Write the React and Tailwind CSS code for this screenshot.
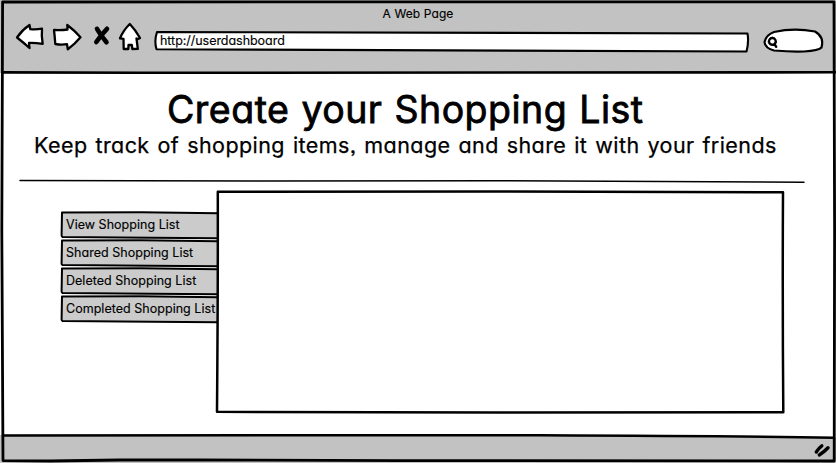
import React from "react";

const FONT =
  "font-['Inter','Open_Sans',sans-serif] [font-feature-settings:'cv11','ss03'] whitespace-nowrap text-black";

function Outline({ d, className = "", fill = "none", width = 3 }) {
  return (
    <svg
      className={`pointer-events-none absolute left-0 top-0 h-full w-full overflow-visible ${className}`}
      fill={fill}
      stroke="#000"
      strokeWidth={width}
      strokeLinecap="round"
      strokeLinejoin="round"
      aria-hidden="true"
    >
      <path d={d} />
    </svg>
  );
}

function NavIcons() {
  return (
    <svg
      width="128"
      height="32"
      viewBox="14 20 128 32"
      fill="#fff"
      stroke="#000"
      strokeWidth="2.3"
      strokeLinejoin="round"
      strokeLinecap="round"
      aria-hidden="true"
    >
      <path d="M17 37.5 Q22 30 29.5 25 L30.3 29.2 Q36 29.8 42 28.7 Q41.3 36 42.7 43.8 Q35 42.8 29 43 L29.5 48 Q24 43 17 37.5Z" />
      <path d="M54 30 Q61 30.5 67.5 29.5 L67.3 25 Q74 30 80.5 37.3 Q75 44 67.8 49.3 L67 44.2 Q61 45 55.3 44 Q54.8 37 54 30Z" />
      <path d="M97 28.8 Q100 34 106.5 42.2 M107 28.8 Q101 35 96.3 42" strokeWidth="4.6" />
      <path d="M129.8 24 Q135.5 30 140 38 Q138 39.5 136.5 38.5 L137.8 48.8 L132.4 49 L131.8 45 L128.5 45 L128.3 49 L123.7 49 L123.5 38.8 L120 38.3 Q123.5 30 129.8 24Z" />
    </svg>
  );
}

const items = [
  "View Shopping List",
  "Shared Shopping List",
  "Deleted Shopping List",
  "Completed Shopping List",
];

export default function App() {
  return (
    <div className="relative flex h-[463px] w-[836px] flex-col overflow-hidden bg-white">
      <header className="relative h-[73px] shrink-0 bg-[#c2c2c2]">
        <div className="flex h-[20px] justify-center pt-[6px]">
          <span className={`${FONT} text-[12px] leading-[16px] tracking-[0.1px] [-webkit-text-stroke:0.15px_#000]`}>
            A Web Page
          </span>
        </div>
        <div className="flex items-start pl-[14px]">
          <NavIcons />
          <div className="relative ml-[13px] mt-[11px] h-[21px] w-[593px]">
            <Outline
              fill="#fff"
              width={2.1}
              d="M2 1 Q200 .8 592.5 2.5 Q594 11 591.5 20.5 Q280 20 1.5 18.3 Q-1 10 2 1Z"
            />
            <span
              className={`relative ml-[5px] block pt-[2px] text-[12.5px] leading-[16px] tracking-[-0.04px] [-webkit-text-stroke:0.15px_#000] ${FONT}`}
            >
              http://userdashboard
            </span>
          </div>
          <div className="relative ml-[16px] mt-[9px] h-[24px] w-[59px]">
            <Outline
              fill="#fff"
              width={2.2}
              d="M10 3 Q30 -1.5 51 2.5 Q60.5 8 57.5 18.5 Q55 21.5 40 22.5 Q27 23 10 21.5 Q1 19 .5 13 Q2 6 10 3Z"
            />
            <Outline width={2.4} d="M8.3 9 a3.4 3.4 0 1 0 .1 0 M10.3 15 L12.2 17.7" />
          </div>
        </div>
        <Outline d="M3 72.4 L140 72.8 L836 72.3" width={2.6} />
      </header>

      <main className="flex flex-1 flex-col">
        <h1
          className={`ml-[167px] mt-[13px] text-[37.5px] leading-[48px] tracking-[0.48px] [word-spacing:1px] [-webkit-text-stroke:0.8px_#000] ${FONT}`}
        >
          Create your Shopping List
        </h1>
        <p
          className={`-mt-px ml-[34px] text-[21.5px] leading-[24px] tracking-[0.42px] [word-spacing:1.5px] [-webkit-text-stroke:0.25px_#000] ${FONT}`}
        >
          Keep track of shopping items, manage and share it with your friends
        </p>
        <div className="relative ml-[20px] mt-[23px] h-[2px] w-[784px] shrink-0">
          <Outline width={1.5} d="M0 .4 L240 1 L480 .7 L784 2.2" />
        </div>

        <div className="ml-[61px] mt-[9px] flex">
          <nav className="mt-[21px] flex w-[156px] flex-col gap-[2px]">
            {items.map((label) => (
              <div key={label} className="relative h-[26px]">
                <Outline
                  fill="#cbcbcb"
                  width={2}
                  d="M1 .5 L80 .3 L157 1.3 L157 26.3 L90 25.7 L1.5 25 Q.3 24 .6 23 Z"
                />
                <span
                  className={`relative block pl-[5px] pt-[5px] text-[12.5px] leading-[16px] tracking-[0.03px] [-webkit-text-stroke:0.15px_#000] ${FONT}`}
                >
                  {label}
                </span>
              </div>
            ))}
          </nav>
          <section className="relative h-[221px] w-[567px]">
            <Outline
              fill="#fff"
              width={2.5}
              d="M.8 .8 L280 .5 L566 1.2 Q565.4 110 566.3 221.3 L280 221.4 L0 220.8 Q1 100 .8 .8Z"
            />
          </section>
        </div>
      </main>

      <footer className="relative h-[28px] shrink-0 bg-[#c2c2c2]">
        <Outline fill="#fff" width={0} d="M440 0 L836 0 L836 3 Z" />
        <Outline width={2.5} d="M3 .4 Q400 -.2 540 .3 Q730 1 834 2.8" />
        <Outline width={3.4} d="M816.3 17 Q819 12.8 821.8 10.8 M819.3 20 Q823.5 17.5 828 12.8" />
      </footer>

      <Outline
        width={2.8}
        d="M2.6 2 L400 1.8 L834 1.8 L834.6 230 L834.2 461 L400 460.6 L200 460 L120 460 L50 461 L3 460.6 L1.8 230 Z"
      />
    </div>
  );
}
